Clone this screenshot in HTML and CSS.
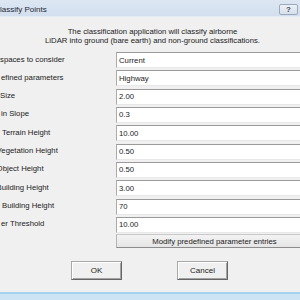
FILE: index.html
```html
<!DOCTYPE html>
<html lang="en">
<head>
  <meta charset="UTF-8" />
  <meta name="viewport" content="width=device-width, initial-scale=1.0" />
  <title>Classify Points</title>
  <link rel="stylesheet" href="styles.css">
</head>
<body>
  <div class="window">
    <div class="titlebar">
      <span class="title">lassify Points</span>
      <span class="help">?</span>
    </div>

    <div class="client">
      <p class="intro">The classification application will classify airborne<br>LiDAR into ground (bare earth) and non-ground classifications.</p>

      <div class="form">
        <span class="label">spaces to consider</span>
        <input class="field" type="text" value="Current" />

        <span class="label in1">efined parameters</span>
        <input class="field" type="text" value="Highway" />

        <span class="label">Size</span>
        <input class="field" type="text" value="2.00" />

        <span class="label in1">in Slope</span>
        <input class="field" type="text" value="0.3" />

        <span class="label in2">Terrain Height</span>
        <input class="field" type="text" value="10.00" />

        <span class="label cut">Vegetation Height</span>
        <input class="field" type="text" value="0.50" />

        <span class="label cut">Object Height</span>
        <input class="field" type="text" value="0.50" />

        <span class="label cut">Building Height</span>
        <input class="field" type="text" value="3.00" />

        <span class="label in2">Building Height</span>
        <input class="field" type="text" value="70" />

        <span class="label in1">er Threshold</span>
        <input class="field" type="text" value="10.00" />

        <span class="label"></span>
        <button class="modify">Modify predefined parameter entries</button>
      </div>

      <div class="actions">
        <button class="btn">OK</button>
        <button class="btn">Cancel</button>
      </div>
    </div>

    <div class="frame"></div>
  </div>
</body>
</html>
```

FILE: styles.css
```css
body {
  margin: 0;
  background: #f0f0f0;
  font-family: "Liberation Sans", Arial, sans-serif;
  font-size: 7.75px;
  color: #1b1b1b;
}
.window {
  width: 300px;
  height: 300px;
  overflow: hidden;
  display: flex;
  flex-direction: column;
}
.titlebar {
  height: 17px;
  flex: none;
  display: flex;
  justify-content: space-between;
  align-items: flex-start;
  background: linear-gradient(#dde7f3, #d3dfee);
  border-bottom: 1px solid #e4ebf4;
  box-sizing: border-box;
}
.title {
  font-size: 8px;
  margin-top: 5px;
  color: #1e2733;
}
.help {
  width: 19px;
  height: 11px;
  margin: 4px 2px 0 0;
  box-sizing: border-box;
  border: 1px solid #9aa9bc;
  border-radius: 2px;
  background: linear-gradient(#eef2f7, #d6dfea);
  font-size: 8px;
  font-weight: bold;
  line-height: 9px;
  text-align: center;
  color: #3c4a5c;
}
.client {
  flex: 1;
  padding-top: 10px;
}
.intro {
  margin: 0;
  padding-left: 5px;
  text-align: center;
  line-height: 9px;
}
.form {
  display: grid;
  grid-template-columns: 116px 197px;
  grid-auto-rows: 16px;
  row-gap: 2.33px;
  margin-top: 7px;
}
.label {
  align-self: center;
  white-space: nowrap;
  margin-top: -2px;
}
.label.in1 {
  padding-left: 1px;
}
.label.in2 {
  padding-left: 2px;
}
.label.cut {
  margin-left: -3.4px;
}
.field {
  box-sizing: border-box;
  width: 197px;
  height: 16px;
  margin: 0;
  padding: 0 2px;
  border: 1px solid;
  border-color: #9a9a9a #e3e3e3 #e8e8e8 #ababab;
  background: #fff;
  font: inherit;
  color: inherit;
  outline: none;
}
.modify {
  box-sizing: border-box;
  width: 197px;
  height: 14px;
  margin: -1px 0 0 0;
  padding: 0;
  border: 1px solid;
  border-color: #c9c9c9 #bdbdbd #8c8c8c #b5b5b5;
  background: linear-gradient(#f3f3f3, #e5e5e5);
  font: inherit;
  color: inherit;
}
.actions {
  display: flex;
  gap: 55px;
  margin-top: 10px;
  padding-left: 71px;
}
.btn {
  box-sizing: border-box;
  width: 51px;
  height: 19px;
  padding: 0;
  border: 1px solid;
  border-color: #a9a9a9 #666 #666 #a9a9a9;
  box-shadow: inset 1px 1px 0 #fff, inset -1px -1px 0 #a3a3a3;
  background: #f0f0f0;
  font: inherit;
  font-size: 8px;
  color: inherit;
}
.frame {
  height: 8px;
  flex: none;
  background: linear-gradient(#a4d2ee 0, #a4d2ee 2px, #cde4f5 2px);
}
```
